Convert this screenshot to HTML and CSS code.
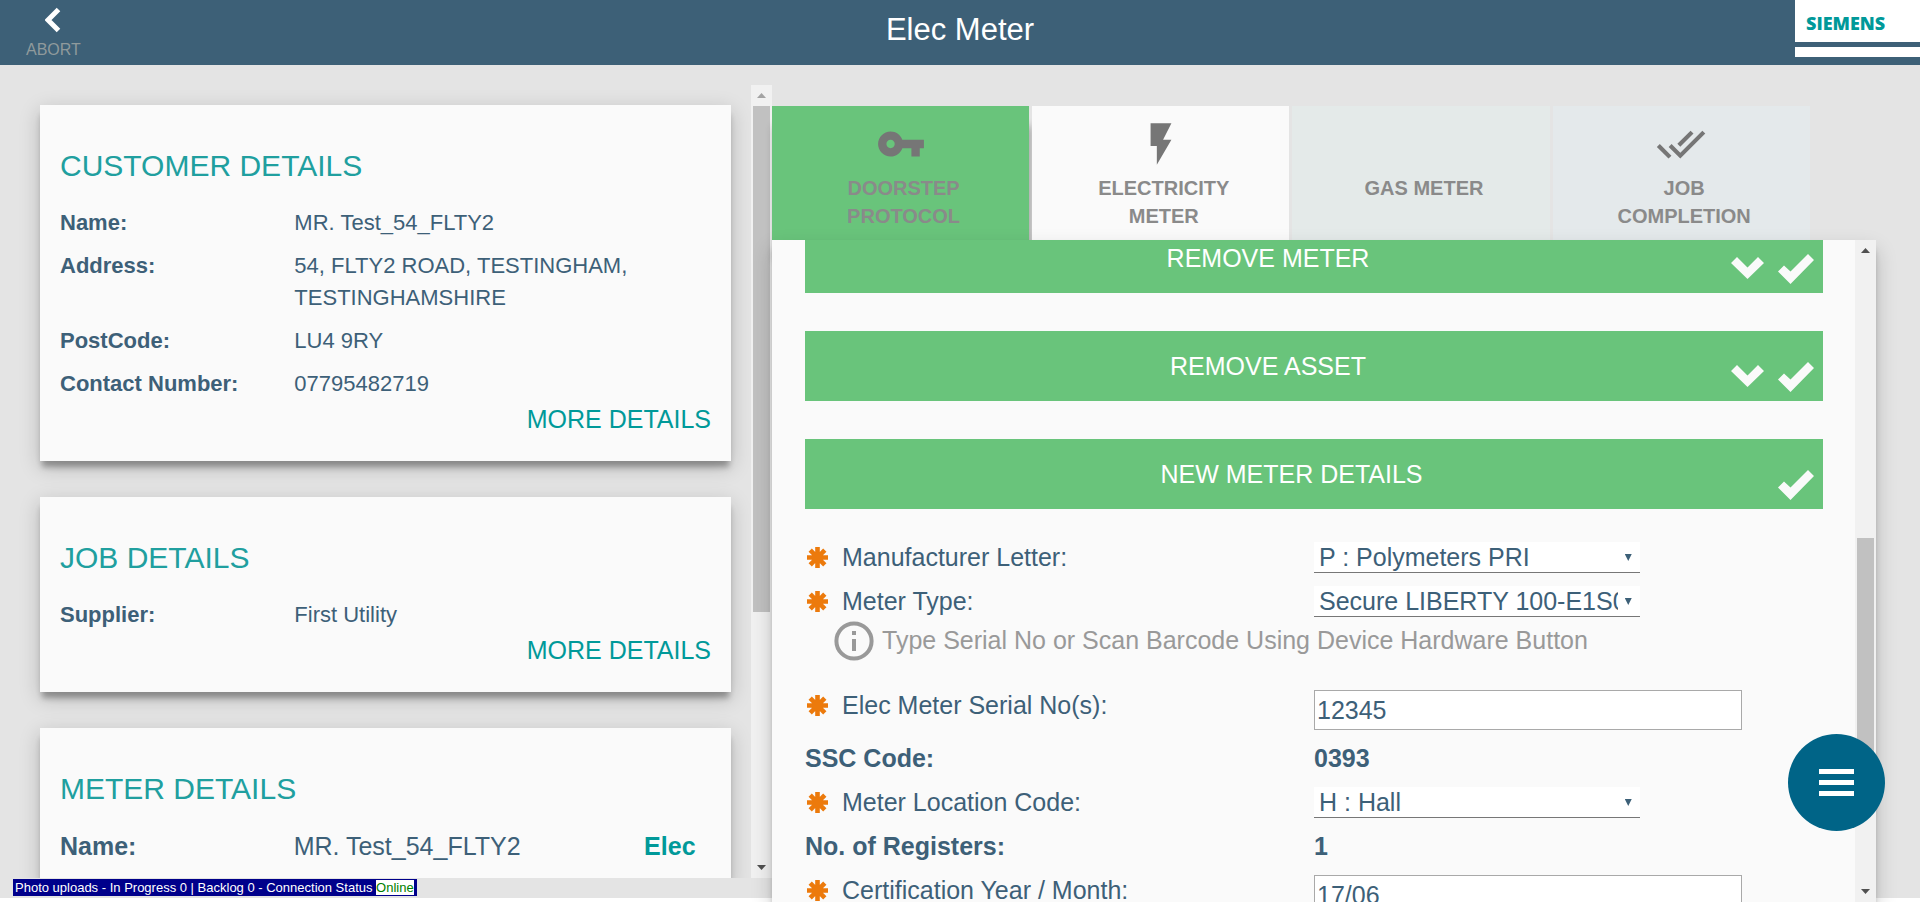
FILE: index.html
```html
<!DOCTYPE html>
<html lang="en">
<head>
<meta charset="utf-8">
<title>Elec Meter</title>
<link rel="stylesheet" href="styles.css">
</head>
<body>
<svg class="sprite" aria-hidden="true">
  <symbol id="i-asterisk" viewBox="0 0 21 21"><path d="M10.500 0V21M0 10.500H21M3.200 3.200L17.800 17.800M17.800 3.200L3.200 17.800" stroke="currentColor" stroke-width="4.600"/><circle cx="10.500" cy="10.500" r="6" fill="currentColor"/></symbol>
  <symbol id="i-check" viewBox="0 0 36 30"><path d="M0 17.500L6 11.500L12.500 17.500L30 0L36 6L12.500 30Z" fill="currentColor"/></symbol>
  <symbol id="i-down" viewBox="0 0 33 22"><path d="M0 6L6 0L16.500 10.500L27 0L33 6L16.500 22Z" fill="currentColor"/></symbol>
</svg>
<div class="app">
  <header class="topbar">
    <button class="abort" type="button">
      <svg width="16" height="26" viewBox="0 0 16 26" aria-hidden="true"><path d="M13.500 2.500L3 13L13.500 23.500" fill="none" stroke="#fff" stroke-width="5"/></svg>
      <span>ABORT</span>
    </button>
    <h1 class="title">Elec Meter</h1>
    <div class="brand"><span class="brand-name">SIEMENS</span><span class="brand-strip"></span></div>
  </header>

  <main class="main">
    <aside class="side">
      <div class="side-list">
        <section class="card">
          <h2>CUSTOMER DETAILS</h2>
          <dl class="facts">
            <dt>Name:</dt><dd>MR. Test_54_FLTY2</dd>
            <dt>Address:</dt><dd>54, FLTY2 ROAD, TESTINGHAM, TESTINGHAMSHIRE</dd>
            <dt>PostCode:</dt><dd>LU4 9RY</dd>
            <dt>Contact Number:</dt><dd>07795482719</dd>
          </dl>
          <a class="more" href="#customer">MORE DETAILS</a>
        </section>
        <section class="card">
          <h2>JOB DETAILS</h2>
          <dl class="facts"><dt>Supplier:</dt><dd>First Utility</dd></dl>
          <a class="more" href="#job">MORE DETAILS</a>
        </section>
        <section class="card">
          <h2>METER DETAILS</h2>
          <dl class="facts facts-meter"><dt>Name:</dt><dd>MR. Test_54_FLTY2</dd><dd class="fuel">Elec</dd></dl>
        </section>
      </div>
      <div class="scroll scroll-side" aria-hidden="true"><i class="up muted"></i><div class="track"><b></b></div><i class="down"></i></div>
    </aside>

    <section class="work">
      <nav class="tabs">
        <button class="tab tab-done" type="button">
          <svg class="tab-icon" viewBox="0 0 24 24" aria-hidden="true"><path d="M12.650 10C11.830 7.670 9.610 6 7 6c-3.310 0-6 2.690-6 6s2.690 6 6 6c2.610 0 4.830-1.670 5.650-4H17v4h4v-4h2v-4H12.650zM7 14c-1.100 0-2-.9-2-2s.9-2 2-2 2 .9 2 2-.9 2-2 2z"/></svg>
          <span>DOORSTEP PROTOCOL</span>
        </button>
        <button class="tab tab-active" type="button">
          <svg class="tab-icon" viewBox="0 0 24 24" aria-hidden="true"><path d="M7 2v11h3v9l7-12h-4l4-8z"/></svg>
          <span>ELECTRICITY METER</span>
        </button>
        <button class="tab tab-gas" type="button">
          <svg class="tab-icon" viewBox="0 0 24 24" aria-hidden="true"></svg>
          <span>GAS METER</span>
        </button>
        <button class="tab tab-job" type="button">
          <svg class="tab-icon" viewBox="0 0 24 24" aria-hidden="true"><path d="M18 7l-1.410-1.410-6.340 6.340 1.410 1.410L18 7zm4.240-1.410L11.660 16.170 7.480 12l-1.410 1.410L11.660 19l12-12-1.420-1.410zM.41 13.410L6 19l1.410-1.410L1.830 12 .41 13.410z"/></svg>
          <span>JOB COMPLETION</span>
        </button>
      </nav>

      <div class="panel">
        <div class="panel-view">
          <div class="bars">
            <button class="bar" type="button"><span>REMOVE METER</span><svg class="ico-down"><use href="#i-down"/></svg><svg class="ico-check"><use href="#i-check"/></svg></button>
            <button class="bar" type="button"><span>REMOVE ASSET</span><svg class="ico-down"><use href="#i-down"/></svg><svg class="ico-check"><use href="#i-check"/></svg></button>
            <button class="bar" type="button"><span>NEW METER DETAILS</span><svg class="ico-check"><use href="#i-check"/></svg></button>
          </div>
          <form class="form">
            <div class="row">
              <label for="maker"><svg class="req"><use href="#i-asterisk"/></svg>Manufacturer Letter:</label>
              <div class="pick"><select id="maker"><option>P : Polymeters PRI</option></select></div>
            </div>
            <div class="row">
              <label for="type"><svg class="req"><use href="#i-asterisk"/></svg>Meter Type:</label>
              <div class="pick"><select id="type"><option>Secure LIBERTY 100-E1S01</option></select></div>
            </div>
            <p class="hint">
              <svg width="40" height="40" viewBox="0 0 40 40" aria-hidden="true"><circle cx="20" cy="20" r="17.600" fill="none" stroke="#999" stroke-width="4"/><path d="M18 10h4v4h-4zM18 18h4v12h-4z" fill="#999"/></svg>
              <span>Type Serial No or Scan Barcode Using Device Hardware Button</span>
            </p>
            <div class="row">
              <label for="serial"><svg class="req"><use href="#i-asterisk"/></svg>Elec Meter Serial No(s):</label>
              <input id="serial" type="text" value="12345">
            </div>
            <div class="row row-fixed"><span>SSC Code:</span><span>0393</span></div>
            <div class="row">
              <label for="location"><svg class="req"><use href="#i-asterisk"/></svg>Meter Location Code:</label>
              <div class="pick"><select id="location"><option>H : Hall</option></select></div>
            </div>
            <div class="row row-fixed"><span>No. of Registers:</span><span>1</span></div>
            <div class="row">
              <label for="cert"><svg class="req"><use href="#i-asterisk"/></svg>Certification Year / Month:</label>
              <input id="cert" type="text" value="17/06">
            </div>
          </form>
        </div>
        <div class="scroll scroll-panel" aria-hidden="true"><i class="up"></i><div class="track"><b></b></div><i class="down"></i></div>
      </div>
    </section>
  </main>
</div>
<div class="status">Photo uploads - In Progress 0 | Backlog 0 - Connection Status <span>Online</span></div>
<button class="fab" type="button" aria-label="Menu"><i></i><i></i><i></i></button>
</body>
</html>
```
FILE: styles.css
```css
* { box-sizing: border-box; }
body {
  margin: 0;
  background: #fff;
  color: #3d6078;
  font-family: "Liberation Sans", Arial, sans-serif;
  font-size: 25px;
}
button, input, select { font: inherit; color: inherit; border: 0; border-radius: 0; }
h1, h2, dl, dd, p { margin: 0; font-weight: normal; }
.sprite { position: absolute; width: 0; height: 0; }
.app { display: flex; flex-direction: column; height: 100vh; overflow: hidden; }

/* Top bar */
.topbar {
  display: grid;
  grid-template-columns: 1fr auto 1fr;
  flex: none;
  height: 65px;
  background: #3d6077;
  color: #fff;
}
.abort {
  justify-self: start;
  display: flex;
  flex-direction: column;
  align-items: center;
  gap: 7px;
  margin-left: 26px;
  padding: 7px 0 0;
  background: none;
  color: #8f9a9c;
  font-size: 16px;
  line-height: 20px;
}
.title { font-size: 31px; line-height: 60px; }
.brand {
  justify-self: end;
  display: flex;
  flex-direction: column;
  width: 125px;
  height: 57px;
  background: #fff;
  color: #099;
}
.brand-name { padding-left: 11px; font: 800 18px/46px "Open Sans", sans-serif; height: 42px; }
.brand-strip { height: 5px; background: #3d6077; }

/* Columns */
.main { display: flex; flex: 1; min-height: 0; margin-bottom: 4px; padding-right: 44px; background: #e4e4e4; }
.side { display: flex; flex: 1; min-width: 0; padding: 20px 0; }
.side-list {
  flex: 1;
  display: flex;
  flex-direction: column;
  gap: 36px;
  padding: 20px 20px 0 40px;
  overflow: hidden;
}
.card {
  flex: none;
  padding: 43px 20px 24px;
  background: #fafafa;
  box-shadow: 0 8px 6px -2px rgba(0, 0, 0, .3), 0 6px 20px rgba(0, 0, 0, .2);
}
.card h2 { margin-bottom: 23px; color: #209f9f; font-size: 30px; line-height: 36px; }
.facts { display: grid; grid-template-columns: 36% 1fr; row-gap: 11px; font-size: 22px; line-height: 32px; }
.facts dt { font-weight: bold; }
.facts-meter { grid-template-columns: 36% 1fr 10%; padding-right: 2px; font-size: 25px; }
.facts-meter .fuel { font-weight: bold; color: #099; }
.more { display: block; margin-top: 1px; color: #099; line-height: 36px; text-align: right; text-decoration: none; }

/* Scroll bars */
.scroll { flex: none; display: flex; flex-direction: column; align-items: center; width: 21px; background: #f1f1f1; }
.scroll i { width: 9px; height: 5px; margin: 8px 0; background: #505050; }
.scroll .up { clip-path: polygon(50% 0, 100% 100%, 0 100%); }
.scroll .down { clip-path: polygon(0 0, 100% 0, 50% 100%); }
.scroll .muted { background: #a3a3a3; }
.track { flex: 1; display: grid; width: 17px; }
.track b { grid-row: 2; background: #c1c1c1; }
.scroll-side .track { grid-template-rows: 0 506fr 245fr; }
.scroll-panel .track { grid-template-rows: 277fr 262fr 81fr; }

/* Tabs */
.work { flex: none; display: flex; flex-direction: column; width: 57.5vw; margin-bottom: -4px; padding-top: 41px; }
.tabs { display: grid; grid-template-columns: repeat(4, 1fr); gap: 3px; width: 94%; min-height: 134px; }
.tab {
  display: flex;
  flex-direction: column;
  align-items: center;
  gap: 5px;
  padding: 13px 0 10px;
  background: #e4eae9;
  color: #8a8a8a;
  font-size: 20px;
  font-weight: bold;
  line-height: 28px;
}
.tab span { padding: 0 41px 0 47px; }
.tab-icon { width: 50px; height: 50px; fill: #767676; }
.tab-done { background: #69c47b; box-shadow: 2px 20px 8px rgba(0, 0, 0, .3); }
.tab-active { background: #fafafa; }
.tab-job { background: #e4e9eb; }

/* Work panel */
.panel {
  position: relative;
  flex: 1;
  display: flex;
  min-height: 0;
  background: #fafafa;
  box-shadow: 0 8px 6px -2px rgba(0, 0, 0, .3), 0 10px 20px rgba(0, 0, 0, .2);
}
.panel-view { flex: 1; min-width: 0; padding: 0 32px 0 33px; overflow: hidden; }
.bars { display: grid; gap: 38px; margin-top: -17px; }
.bar { display: flex; align-items: center; height: 70px; padding: 0 9px 0 0; background: #69c47b; color: #fff; }
.bar span { flex: 1; text-align: center; }
.bar svg { color: #fafafa; }
.ico-down { width: 33px; height: 22px; margin: 20px 14px 0 0; }
.ico-check { width: 36px; height: 30px; margin-top: 22px; }

.form { display: flex; flex-direction: column; gap: 13px; padding-top: 33px; line-height: 31px; }
.row { display: grid; grid-template-columns: 50% 1fr; align-items: start; }
.row label { display: flex; align-items: center; gap: 14px; white-space: nowrap; }
.row-fixed { font-weight: bold; }
.req { width: 21px; height: 21px; margin-left: 2px; color: #ec7a0c; }
.pick { position: relative; width: 64%; }
.pick::after {
  content: "";
  position: absolute;
  top: 12px;
  right: 8px;
  width: 7px;
  height: 7px;
  background: #3d6078;
  clip-path: polygon(0 0, 100% 0, 50% 100%);
}
.pick select {
  display: block;
  width: 100%;
  height: 31px;
  padding: 0 22px 0 5px;
  appearance: none;
  background: #fff;
  border-bottom: 1px solid #777;
}
.row input { width: 84%; height: 40px; padding: 0 2px; background: #fff; border: 1px solid #a9a9a9; }
.hint { display: flex; gap: 8px; margin: -9px 0 16px 29px; color: #999; white-space: nowrap; }
.hint span { line-height: 38px; }

/* Overlays */
.status {
  position: fixed;
  left: 13px;
  bottom: 6px;
  padding: 1px 3px 1px 2px;
  background: #00008b;
  color: #fff;
  font-size: 13px;
  line-height: 15px;
}
.status span { background: #fff; color: green; }
.fab {
  position: fixed;
  right: 35px;
  bottom: 71px;
  display: flex;
  flex-direction: column;
  align-items: center;
  justify-content: center;
  gap: 6px;
  width: 97px;
  height: 97px;
  padding: 0;
  border-radius: 50%;
  background: #006487;
}
.fab i { width: 35px; height: 5px; background: #fff; }
```
